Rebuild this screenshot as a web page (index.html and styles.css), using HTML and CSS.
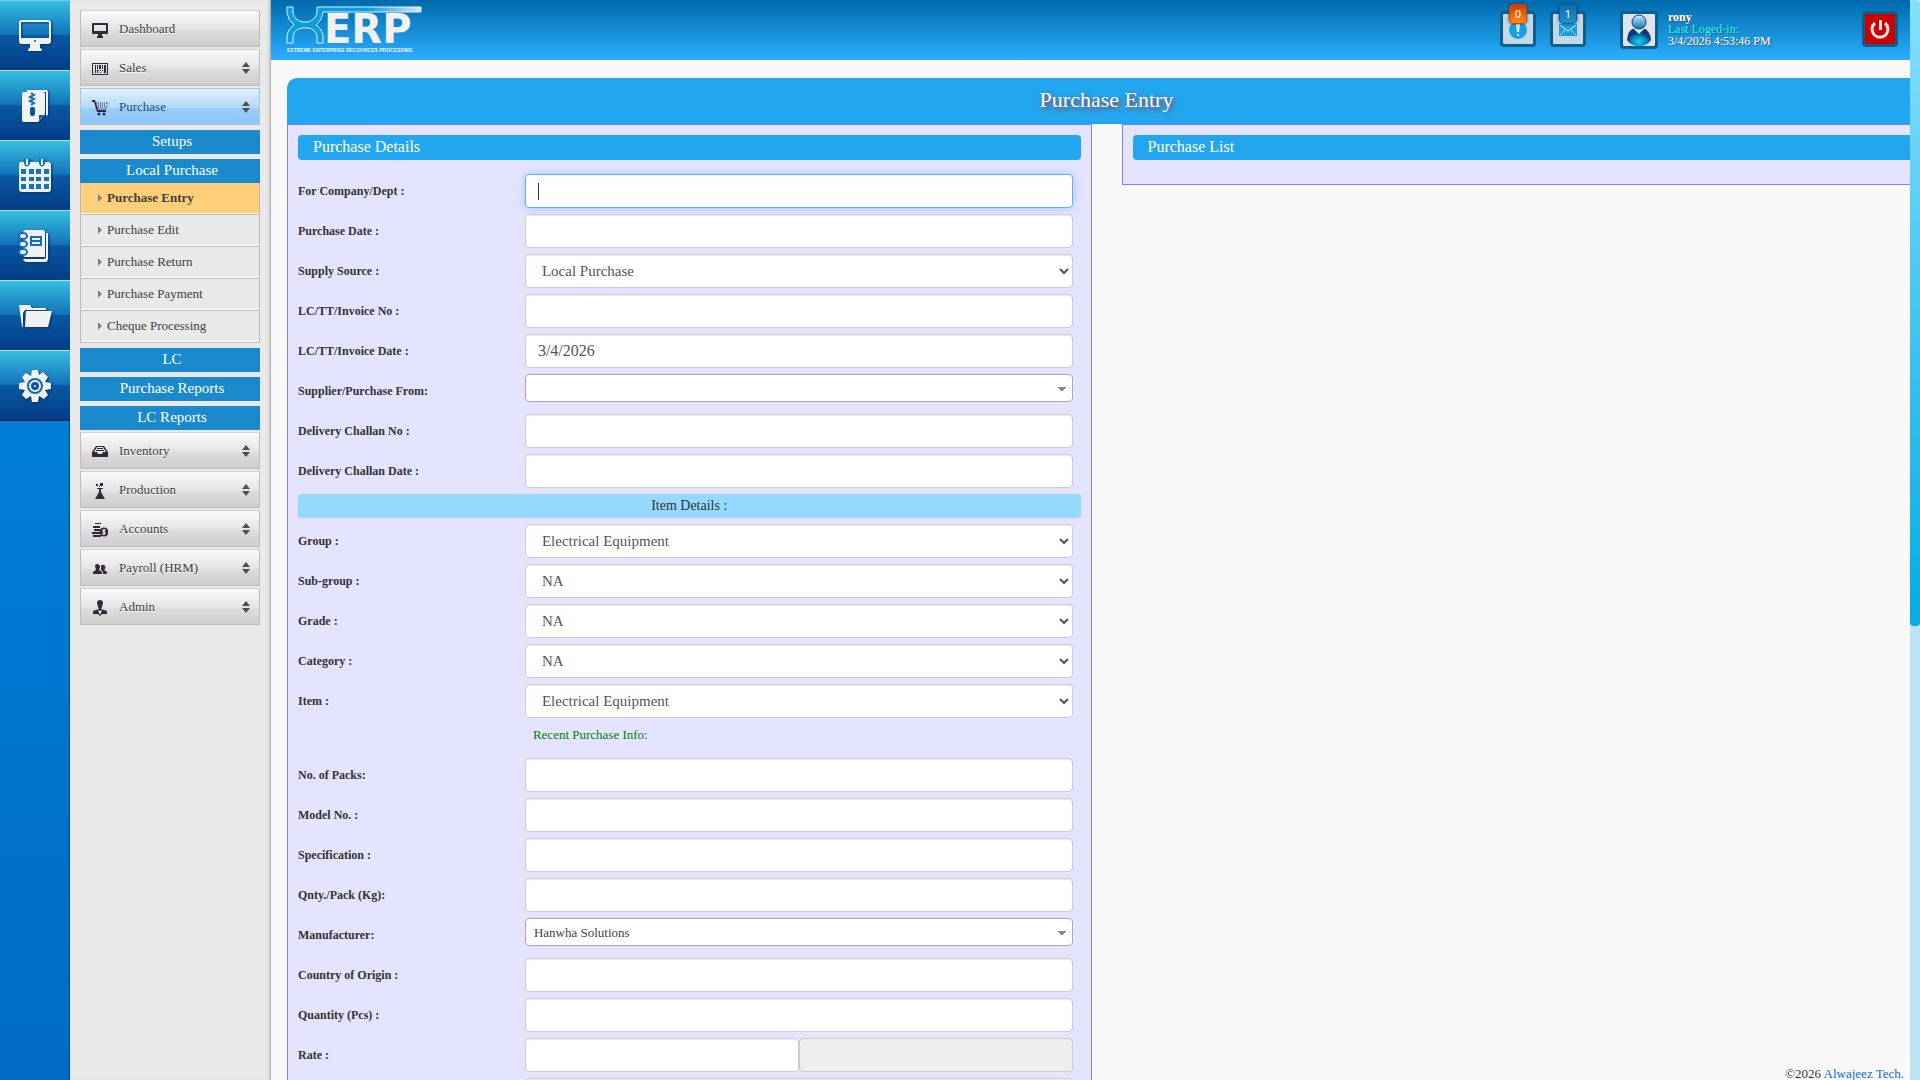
FILE: index.html
```html
<!DOCTYPE html>
<html lang="en">
<head>
<meta charset="utf-8">
<title>Purchase Entry</title>
<link rel="stylesheet" href="styles.css">
</head>
<body>
<svg class="defs" aria-hidden="true">
  <symbol id="updown" viewBox="0 0 8 12"><path d="M0 5L4 0L8 5ZM0 7H8L4 12Z"/></symbol>
  <symbol id="screen" viewBox="0 0 16 16"><path fill-rule="evenodd" d="M1 1H15Q16 1 16 2V11Q16 12 15 12H1Q0 12 0 11V2Q0 1 1 1ZM2 3V9H14V3ZM6 12H10V14H11V16H5V14H6Z"/></symbol>
</svg>
<div class="shell">
  <nav class="rail" aria-label="Shortcuts">
    <a class="tile" href="#" aria-label="Desktop"><svg viewBox="0 0 34 34"><path fill-rule="evenodd" d="M4 1H30Q33 1 33 4V22Q33 25 30 25H4Q1 25 1 22V4Q1 1 4 1ZM4 3Q3 3 3 4V19H31V4Q31 3 30 3ZM12 25H22V29L24 30V32H10V30L12 29Z"/><circle cx="17" cy="22" r="1" fill="#0b55a5"/></svg></a>
    <a class="tile" href="#" aria-label="Archive"><svg viewBox="0 0 34 34"><path d="M9 1H28Q30 1 30 3V26L28 27V3H9Z"/><path d="M6 3H25Q27 3 27 5V25L20 33H6Q4 33 4 31V5Q4 3 6 3Z"/><path d="M21 31V26H26Z" fill="#0b55a5"/><path d="M13 4L16 6L12 8L16 10L12 12L16 14L13 16" fill="none" stroke="#1274b8" stroke-width="2"/><rect x="12" y="18" width="5" height="9" rx="2" fill="#0b55a5"/></svg></a>
    <a class="tile" href="#" aria-label="Calendar"><svg viewBox="0 0 34 34"><path d="M3 3H30Q33 3 33 6V30Q33 33 30 33H4Q1 33 1 30V6Q1 3 3 3Z"/><g fill="#1274b8"><path d="M6 0H12V5Q9 10 6 5ZM21 0H27V5Q24 10 21 5Z"/><path d="M3 10H8V15H3ZM11 10H16V15H11ZM18 10H23V15H18ZM26 10H31V15H26ZM3 18H8V22H3ZM11 18H16V22H11ZM18 18H23V22H18ZM26 18H31V22H26ZM3 25H8V30H3ZM11 25H16V30H11ZM18 25H23V30H18ZM26 25H31V30H26Z"/></g><path d="M8 0H10V6H8ZM23 0H25V6H23Z"/></svg></a>
    <a class="tile" href="#" aria-label="Notebook"><svg viewBox="0 0 34 34"><path d="M8 1H25Q27 1 27 3V28H8Q5 28 5 26V4Q5 1 8 1Z"/><path d="M28 4H30V30Q30 33 27 33H8Q6 33 5 30H26Q28 30 28 28Z"/><g fill="#eee" stroke="#126fb6" stroke-width="2"><ellipse cx="5" cy="7" rx="4" ry="3"/><ellipse cx="5" cy="15" rx="4" ry="3"/><ellipse cx="5" cy="23" rx="4" ry="3"/></g><path d="M12 7H24V17H12Z" fill="#126fb6"/><path d="M14 9H22V11H14ZM14 13H22V15H14Z"/></svg></a>
    <a class="tile" href="#" aria-label="Files"><svg viewBox="0 0 34 34"><path d="M1 6H12L14 9H28V11H7L5 14V28L4 28Z"/><path d="M8 12H34L30 28H7Z"/></svg></a>
    <a class="tile" href="#" aria-label="Settings"><svg viewBox="0 0 34 34"><path d="M14 1H20L21 6L25 3L30 8L27 13L33 14V20L27 21L30 26L26 30L21 27L20 33H14L13 27L8 30L4 26L7 21L1 20V14L7 13L4 8L8 4L13 7Z"/><circle cx="17" cy="17" r="8" fill="#1066ae"/><circle cx="17" cy="17" r="6"/><circle cx="17" cy="17" r="4" fill="#0b55a5"/><circle cx="17" cy="17" r="1"/></svg></a>
  </nav>

  <nav class="menu" aria-label="Main menu">
    <a class="item" href="#"><svg class="glyph" viewBox="0 0 16 16"><use href="#screen"/></svg>Dashboard</a>
    <button class="item" type="button"><svg class="glyph" viewBox="0 0 16 16"><path fill-rule="evenodd" d="M0 2H16V14H0ZM1 3V13H15V3Z"/><path d="M3 4H4V12H3ZM5 4H6V8H5ZM7 4H9V8H7ZM10 4H11V8H10ZM12 4H14V12H12ZM5 9H7V10H6V12H5ZM8 9H9V10H8ZM8 11H9V12H8ZM10 9H11V10H10Z"/></svg>Sales<svg class="updown"><use href="#updown"/></svg></button>
    <button class="item item-open" type="button"><svg class="glyph" viewBox="0 0 16 16"><path d="M0 0H3L6 10H14V12H5L2 2H0Z"/><path d="M4 3H16L14 9H6Z" fill="none" stroke="#33283c" stroke-dasharray="1 1"/><path d="M6 5H14M6 7H14" stroke="#33283c" stroke-dasharray="1 1"/><circle cx="7" cy="14" r="1.5"/><circle cx="12" cy="14" r="1.5"/></svg>Purchase<svg class="updown"><use href="#updown"/></svg></button>
    <div class="submenu">
      <button class="section" type="button">Setups</button>
      <div class="group">
        <button class="section" type="button">Local Purchase</button>
        <ul class="links">
          <li><a class="current" href="#">Purchase Entry</a></li>
          <li><a href="#">Purchase Edit</a></li>
          <li><a href="#">Purchase Return</a></li>
          <li><a href="#">Purchase Payment</a></li>
          <li><a href="#">Cheque Processing</a></li>
        </ul>
      </div>
      <button class="section" type="button">LC</button>
      <button class="section" type="button">Purchase Reports</button>
      <button class="section" type="button">LC Reports</button>
    </div>
    <button class="item" type="button"><svg class="glyph" viewBox="0 0 16 16"><path fill-rule="evenodd" d="M4 2H12L16 8V13H0V8ZM5 3L2 8H5L6 10H10L11 8H14L11 3Z"/><path d="M5 4H11V5H5ZM4 6H12V7H4Z"/></svg>Inventory<svg class="updown"><use href="#updown"/></svg></button>
    <button class="item" type="button"><svg class="glyph" viewBox="0 0 16 16"><path d="M5 5H11V6H9V9L13 16H3L7 9V6H5ZM4 1H6V3H4ZM8 0H11V3H8ZM7 3H8V4H7Z"/></svg>Production<svg class="updown"><use href="#updown"/></svg></button>
    <button class="item" type="button"><svg class="glyph" viewBox="0 0 16 16"><path d="M3 1H9V2H3ZM1 4H8V6H1ZM2 7H8V9H2ZM0 10H8V12H0ZM1 13H9V15H1Z"/><circle cx="12" cy="10" r="4.5"/><path d="M14 8H11V10H13V12H10M12 7V13" fill="none" stroke="#eee"/></svg>Accounts<svg class="updown"><use href="#updown"/></svg></button>
    <button class="item" type="button"><svg class="glyph" viewBox="0 0 16 16"><path d="M3 5Q3 3 5 3Q8 3 8 6L7 9L10 11V13H1V11L4 9ZM9 5Q10 3 12 4Q14 5 13 8L12 9L15 11V13H11V11L9 9Z"/></svg>Payroll (HRM)<svg class="updown"><use href="#updown"/></svg></button>
    <button class="item" type="button"><svg class="glyph" viewBox="0 0 16 16"><path d="M5 3Q5 0 8 0Q11 0 11 3L10 7L9 9L15 11V14H10L8 16L6 14H1V11L7 9L6 7Z"/><path d="M6 10L8 15L10 10L8 11Z" fill="#eee"/></svg>Admin<svg class="updown"><use href="#updown"/></svg></button>
  </nav>

  <main class="main">
    <header class="topbar">
      <svg class="logo" viewBox="0 0 144 48" role="img" aria-label="XERP">
        <defs><linearGradient id="swoosh"><stop offset="0.6" stop-color="#0a9de0"/><stop offset="1" stop-color="#d5e6ee"/></linearGradient></defs>
        <path d="M1 1H7V7Q9 15 17 16H22Q29 14 31 7V1H135V6H37Q36 14 30 19Q36 23 37 30V37H31V30Q29 23 23 22H16Q9 23 7 30V37H1V30Q2 23 8 19Q2 14 1 7Z" fill="url(#swoosh)" stroke="#e2f2fa"/>
        <text class="logo-name" x="38" y="37">ERP</text>
        <text class="logo-tag" x="1" y="46">EXTREME ENTERPRISE RECOURCES PROCESSING</text>
      </svg>
      <div class="tools">
        <button class="tool" type="button" aria-label="Alerts"><svg viewBox="0 0 30 30"><circle cx="15" cy="16" r="9" fill="#18a0e3"/><path d="M13 10H17L16 18H14ZM14 20H16V22H14Z" fill="#e8f4fa"/></svg><span class="badge badge-hot">0</span></button>
        <button class="tool" type="button" aria-label="Messages"><svg viewBox="0 0 30 30"><path d="M6 10H24V22H6Z" fill="#18a0e3"/><path d="M7 11L15 17L23 11M7 21L12 16M23 21L18 16" fill="none" stroke="#d8eaf3"/></svg><span class="badge">1</span></button>
      </div>
      <div class="profile">
        <button class="avatar" type="button" aria-label="Profile"><svg viewBox="0 0 32 32"><defs><radialGradient id="body" cx="0.5" cy="0.75"><stop offset="0" stop-color="#08d8ee"/><stop offset="0.55" stop-color="#098fc4"/><stop offset="1" stop-color="#10377c"/></radialGradient><linearGradient id="shine" x2="0" y2="1"><stop offset="0" stop-color="#c5efff"/><stop offset="1" stop-color="#0b6fb3"/></linearGradient></defs><path d="M4 26Q5 15 12 14H20Q27 16 28 26Q24 32 16 32Q8 32 4 26Z" fill="url(#body)"/><path d="M10 14L16 20L22 14Z" fill="#d9f6ff"/><circle cx="16" cy="8" r="7" fill="url(#shine)" stroke="#113e80"/></svg></button>
        <div class="who"><strong>rony</strong><span class="seen">Last Loged-in:</span><span>3/4/2026 4:53:46 PM</span></div>
      </div>
      <button class="tool power" type="button" aria-label="Log out"><svg viewBox="0 0 30 30"><path d="M10 9A8 8 0 1 0 20 9" fill="none" stroke="#f0e4e4" stroke-width="3"/><path d="M14 6H17V16H14Z" fill="#f0e4e4"/></svg></button>
    </header>

    <div class="workspace">
      <h1 class="title">Purchase Entry</h1>
      <div class="panels">
        <section class="panel">
          <h2 class="panel-title">Purchase Details</h2>
          <form class="fields">
            <div class="field"><label for="company">For Company/Dept :</label><input class="box focused" id="company" type="text"></div>
            <div class="field"><label for="pdate">Purchase Date :</label><input class="box" id="pdate" type="text"></div>
            <div class="field"><label for="source">Supply Source :</label><select class="box" id="source"><option>Local Purchase</option></select></div>
            <div class="field"><label for="invno">LC/TT/Invoice No :</label><input class="box" id="invno" type="text"></div>
            <div class="field"><label for="invdate">LC/TT/Invoice Date :</label><input class="box" id="invdate" type="text" value="3/4/2026"></div>
            <div class="field"><label for="supplier">Supplier/Purchase From:</label><select class="picker" id="supplier"><option></option></select></div>
            <div class="field"><label for="chno">Delivery Challan No :</label><input class="box" id="chno" type="text"></div>
            <div class="field"><label for="chdate">Delivery Challan Date :</label><input class="box" id="chdate" type="text"></div>
            <h3 class="divider">Item Details :</h3>
            <div class="field"><label for="group">Group :</label><select class="box" id="group"><option>Electrical Equipment</option></select></div>
            <div class="field"><label for="subgroup">Sub-group :</label><select class="box" id="subgroup"><option>NA</option></select></div>
            <div class="field"><label for="grade">Grade :</label><select class="box" id="grade"><option>NA</option></select></div>
            <div class="field"><label for="category">Category :</label><select class="box" id="category"><option>NA</option></select></div>
            <div class="field"><label for="item">Item :</label><select class="box" id="item"><option>Electrical Equipment</option></select></div>
            <div class="field note"><span></span><p>Recent Purchase Info:</p></div>
            <div class="field"><label for="packs">No. of Packs:</label><input class="box" id="packs" type="text"></div>
            <div class="field"><label for="model">Model No. :</label><input class="box" id="model" type="text"></div>
            <div class="field"><label for="spec">Specification :</label><input class="box" id="spec" type="text"></div>
            <div class="field"><label for="qpack">Qnty./Pack (Kg):</label><input class="box" id="qpack" type="text"></div>
            <div class="field"><label for="maker">Manufacturer:</label><select class="picker" id="maker"><option>Hanwha Solutions</option></select></div>
            <div class="field"><label for="origin">Country of Origin :</label><input class="box" id="origin" type="text"></div>
            <div class="field"><label for="qty">Quantity (Pcs) :</label><input class="box" id="qty" type="text"></div>
            <div class="field"><label for="rate">Rate :</label><div class="pair"><input class="box" id="rate" type="text"><input class="box" type="text" aria-label="Currency" readonly></div></div>
            <div class="field"><span></span><input class="box" type="text" aria-label="Amount" readonly></div>
          </form>
        </section>
        <section class="panel panel-list">
          <h2 class="panel-title">Purchase List</h2>
        </section>
      </div>
    </div>
    <footer class="foot">©2026 <a href="#">Alwajeez Tech.</a></footer>
  </main>
  <div class="scrolltrack"><div class="scrollthumb"></div></div>
</div>
</body>
</html>
```
FILE: styles.css
```css
* { box-sizing: border-box; }

body {
  margin: 0;
  background: #f9f9f9;
  color: #404040;
  font: 13px/18px "Palatino Linotype", "Book Antiqua", "Liberation Serif", serif;
}

button, input, select { font-family: inherit; }
a { color: inherit; text-decoration: none; }
h1, h2, h3, p, ul { margin: 0; padding: 0; }

.defs { position: absolute; width: 0; height: 0; }

.shell {
  display: grid;
  grid-template-columns: 70px 201px minmax(0, 1fr) 10px;
  height: 100vh;
  overflow: hidden;
}

/* Icon rail */
.rail {
  background: linear-gradient(#008ae6, #006bc2);
  border-right: 1px solid #014a8c;
}
.tile {
  display: flex;
  align-items: center;
  justify-content: center;
  width: 70px;
  height: 70px;
  border-top: 1px solid #b5e2f2;
  background: linear-gradient(#36bfe2 0%, #1272b8 49%, #0a58a6 50%, #033c84 100%);
}
.tile:first-child { border-top-color: #7cc9e2; }
.tile:last-child { height: 71px; border-bottom: 1px solid #02234a; }
.tile svg {
  width: 34px;
  height: 34px;
  fill: #f1f1f1;
  filter: drop-shadow(1px 1px 1px #02306a);
}

/* Main menu */
.menu {
  display: flex;
  flex-direction: column;
  gap: 2px;
  padding: 10px 10px 0;
  background: #e9e9e9;
  border-right: 1px solid #b0b0b0;
  box-shadow: inset -3px 0 3px -2px #c4c4c4;
}
.item {
  display: flex;
  align-items: center;
  gap: 11px;
  height: 37px;
  padding: 0 9px 0 11px;
  border: 1px solid #bdbdbd;
  border-top-color: #d0d0d0;
  background: linear-gradient(#fafafa, #e3e3e3 55%, #dcdcdc 56%, #cecece);
  color: #404040;
  font-size: 13px;
  line-height: 18px;
  text-shadow: 0 1px 0 #fff;
}
.item-open {
  border-color: #a9c5cf;
  background: linear-gradient(#e3f1fd, #b1d7f7 55%, #99ccf9 56%, #8fc6f8);
  color: #1b4f78;
  text-shadow: none;
}
.glyph { width: 16px; height: 16px; margin-top: 3px; fill: #33283c; }
.updown { width: 8px; height: 12px; margin-left: auto; fill: #505050; }

.submenu {
  display: flex;
  flex-direction: column;
  gap: 5px;
  padding-top: 3px;
}
.section {
  width: 100%;
  height: 24px;
  padding: 0 0 2px 4px;
  border: 0;
  background: #1a8acc;
  color: #fff;
  font-size: 15px;
  line-height: 22px;
  text-align: center;
}
.group { display: flex; flex-direction: column; }
.links { list-style: none; border: 1px solid #bcbcbc; border-top: 0; }
.links li + li { border-top: 1px solid #bcbcbc; }
.links a {
  display: flex;
  align-items: center;
  gap: 5px;
  height: 31px;
  padding-left: 17px;
  border-bottom: 1px solid #fff;
}
.links a::before {
  content: "";
  border: solid transparent;
  border-width: 4px 0 4px 4px;
  border-left-color: #808080;
}
.links .current { background: #ffcf7a; font-weight: bold; }

/* Top bar */
.main { position: relative; overflow: hidden; }
.topbar {
  display: flex;
  align-items: flex-start;
  height: 60px;
  padding: 11px 12px 0 15px;
  background: linear-gradient(#0069ab, #2bafff);
}
.logo { width: 144px; height: 48px; margin-top: -5px; }
.logo-name { font: bold 40px "DejaVu Sans", sans-serif; fill: #f1f1f1; }
.logo-tag { font: bold 5px "Liberation Sans", sans-serif; fill: #eaf6fd; }
.tools { display: flex; gap: 14px; margin-left: auto; }
.tool {
  position: relative;
  width: 36px;
  height: 36px;
  padding: 0;
  border: 3px solid #0a5f8c;
  border-radius: 4px;
  background: #c3d8e4;
}
.tool svg, .avatar svg { display: block; width: 100%; height: 100%; }
.badge {
  position: absolute;
  top: -10px;
  left: 6px;
  width: 18px;
  height: 20px;
  border: 1px solid #0a5f9a;
  border-radius: 4px;
  background: linear-gradient(#0d6bad, #2290d6);
  box-shadow: 0 0 3px #05486f;
  color: #fff;
  font: 11px/18px "Noto Sans", sans-serif;
}
.badge-hot { border-color: #c04a10; background: linear-gradient(#cc3a00, #ff8a10); }
.profile { display: flex; gap: 10px; width: 242px; margin-left: 34px; }
.avatar {
  width: 38px;
  height: 38px;
  padding: 0;
  border: 3px solid #0a5f8c;
  border-radius: 4px;
  background: #dfe3e8;
}
.who {
  display: flex;
  flex-direction: column;
  color: #fff;
  font-size: 12px;
  line-height: 12px;
  text-shadow: 1px 1px 1px #555;
}
.seen { color: #0ff; }
.power { background: #c00; border-color: #0a5f8c; }

/* Workspace runs past the right edge of the main area */
.workspace { width: 100%; margin: 18px 0 0 16px; }
.title {
  height: 46px;
  border-radius: 10px 10px 0 0;
  background: #22a6f0;
  color: #fff;
  font-size: 22px;
  font-weight: normal;
  line-height: 44px;
  text-align: center;
  text-shadow: 2px 2px 5px #a03030;
}
.panels {
  display: grid;
  grid-template-columns: 1fr 1fr;
  gap: 30px;
  align-items: start;
}
.panel {
  padding: 10px;
  border: 1px solid #8080ff;
  background: #e4e4ff;
}
.panel-list { padding-bottom: 24px; }
.panel-title {
  height: 25px;
  padding-left: 15px;
  border-radius: 4px;
  background: #22a6f0;
  color: #fff;
  font-size: 16px;
  font-weight: normal;
  line-height: 24px;
}

/* Form */
.fields { display: grid; gap: 6px; padding-top: 14px; }
.field {
  display: grid;
  grid-template-columns: 29% 1fr 8px;
  align-items: start;
  min-height: 34px;
}
.field label {
  color: #333;
  font-size: 12px;
  font-weight: bold;
  line-height: 34px;
}
.box, .picker {
  width: 100%;
  min-width: 0;
  border: 1px solid #ccc;
  border-radius: 4px;
  background: #fff;
  color: #555;
}
.box {
  height: 34px;
  padding: 6px 12px;
  box-shadow: inset 0 1px 1px #ececec;
  font-size: 16px;
}
select.box { font-size: 15px; }
.box:read-only:not(select) { background: #eee; }
.focused {
  border-color: #66afe9;
  background: linear-gradient(#333, #333) 12px 8px / 1px 17px no-repeat #fff;
  box-shadow: 0 0 8px #9cc6f5;
}
.picker {
  height: 28px;
  padding: 0 8px;
  appearance: none;
  border-color: #aaa;
  background: linear-gradient(to bottom left, #888 50%, transparent 50%) right 10px top 12px / 4px 5px no-repeat,
    linear-gradient(to bottom right, #888 50%, transparent 50%) right 6px top 12px / 4px 5px no-repeat, #fff;
  color: #444;
  font-size: 13px;
}
.pair { display: grid; grid-template-columns: 1fr 1fr; }
.divider {
  height: 24px;
  border-radius: 3px;
  background: #95d9ff;
  color: #333;
  font-size: 14px;
  font-weight: normal;
  line-height: 24px;
  text-align: center;
}
.note { min-height: 28px; }
.note p { padding-left: 8px; color: green; line-height: 22px; }

.foot {
  position: absolute;
  right: 6px;
  bottom: -3px;
  color: #333;
}
.foot a { color: #0a6cd6; }

/* Page scrollbar */
.scrolltrack { background: #bfe3f6; }
.scrollthumb {
  height: 58%;
  border-radius: 4px;
  background: linear-gradient(#87e0fd, #53cbf1 40%, #05abe0);
}
```
